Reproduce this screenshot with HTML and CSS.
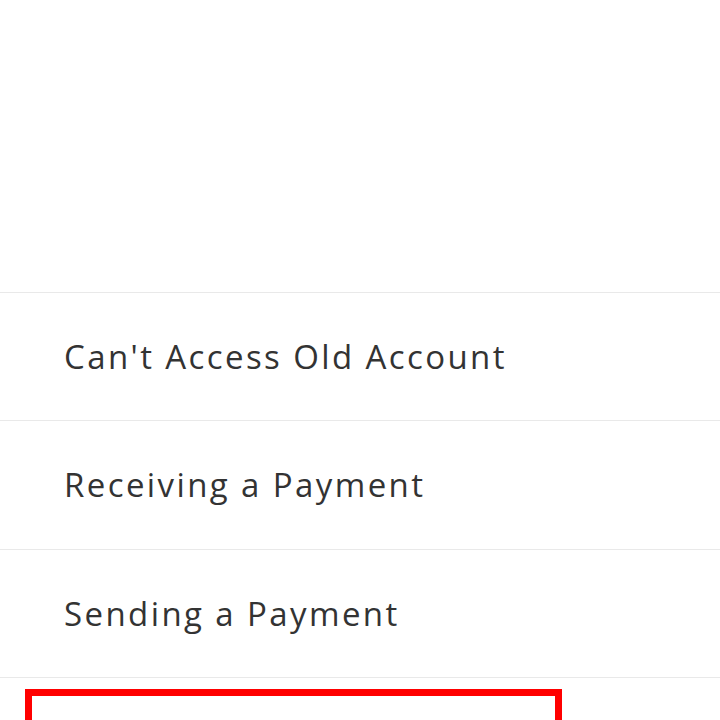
FILE: index.html
```html
<!DOCTYPE html>
<html>
<head>
<meta charset="utf-8">
<link rel="stylesheet" href="styles.css">
</head>
<body>
<div class="top"></div>
<ul class="list">
  <li class="row">Can't Access Old Account</li>
  <li class="row">Receiving a Payment</li>
  <li class="row">Sending a Payment</li>
  <li class="row row-last"><div class="highlight"></div></li>
</ul>
</body>
</html>
```

FILE: styles.css
```css
html, body {
  margin: 0;
  padding: 0;
  background: #ffffff;
}
body {
  width: 720px;
  height: 720px;
  overflow: hidden;
  font-family: "Open Sans", "Noto Sans", sans-serif;
  color: #333333;
}
.top {
  height: 292px;
}
.list {
  list-style: none;
  margin: 0;
  padding: 0;
}
.row {
  box-sizing: border-box;
  height: 128.33px;
  border-top: 1px solid #e9e9e9;
  display: flex;
  align-items: center;
  padding-left: 64px;
  font-size: 33px;
  letter-spacing: 2.4px;
  padding-bottom: 0;
}
.row-last {
  height: 43px;
  align-items: flex-start;
  padding: 11px 0 0 25px;
}
.highlight {
  box-sizing: border-box;
  width: 537px;
  height: 32px;
  border: 7px solid #ff0000;
  border-bottom: none;
}
```
